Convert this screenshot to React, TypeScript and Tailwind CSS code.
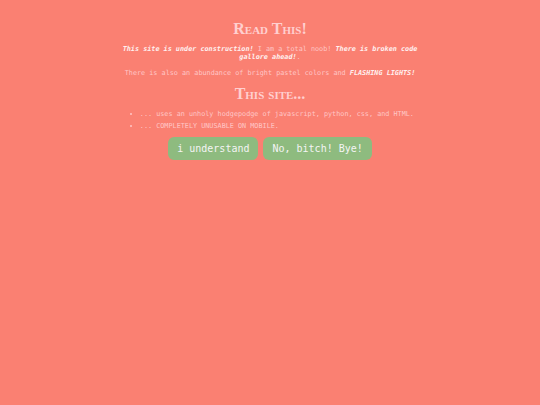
import React from 'react';

const mono = "font-['DejaVu_Sans_Mono',monospace]";
const serif = "font-['Liberation_Serif',serif]";

export default function App() {
  return (
    <div className="min-h-[405px] w-full bg-[#fa8072] text-[#ffc6c6]">
      <div className="mx-auto w-[304px] pt-[19px] text-center">
        <h1 className={`${serif} text-[16px] font-bold leading-[20px] [font-variant:small-caps] text-[#ffcfcf]`}>
          Read This!
        </h1>
        <p className={`${mono} mt-[6px] text-[6.8px] leading-[8px]`}>
          <em className="font-bold text-[#fff0f0]">This site is under construction!</em> I am a total noob!{' '}
          <em className="font-bold text-[#fff0f0]">There is broken code gallore ahead!</em>.
        </p>
        <p className={`${mono} mt-[8px] text-[6.8px] leading-[8px]`}>
          There is also an abundance of bright pastel colors and{' '}
          <em className="font-bold text-[#fff0f0]">FLASHING LIGHTS!</em>
        </p>
        <h2 className={`${serif} mt-[7px] text-[16px] font-bold leading-[20px] [font-variant:small-caps] text-[#ffcfcf]`}>
          This site...
        </h2>
        <ul className={`${mono} mt-[6px] list-inside list-disc pl-[12px] text-left text-[6.8px] leading-[8px]`}>
          <li>... uses an unholy hodgepodge of javascript, python, css, and HTML.</li>
          <li className="mt-[4px]">... COMPLETELY UNUSABLE ON MOBILE.</li>
        </ul>
      </div>
      <div className="mt-[7px] flex justify-center gap-[5px]">
        <button className={`${mono} h-[23px] rounded-[6px] bg-[#8ebb7f] px-[9px] text-[10px] text-[#f4f4f4]`}>
          i understand
        </button>
        <button className={`${mono} h-[23px] rounded-[6px] bg-[#8ebb7f] px-[9px] text-[10px] text-[#f4f4f4]`}>
          No, bitch! Bye!
        </button>
      </div>
    </div>
  );
}
